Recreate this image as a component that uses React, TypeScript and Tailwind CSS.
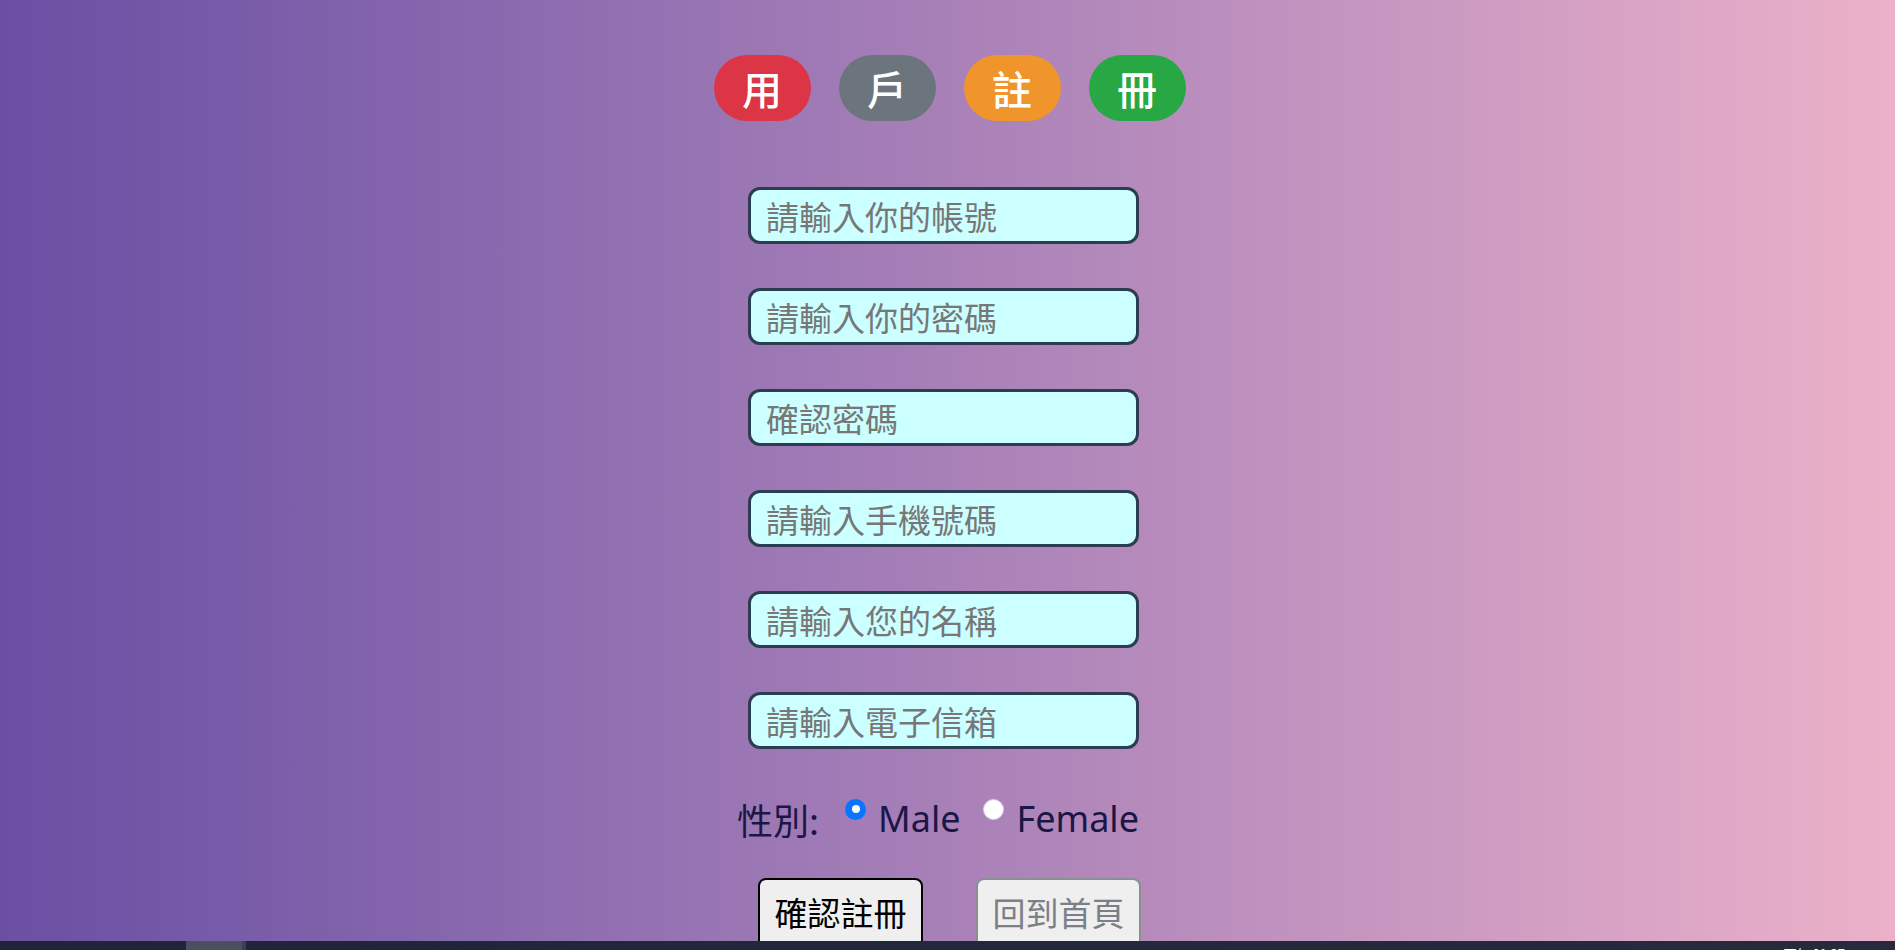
import React from "react";

const cjk = { fontFamily: '"Noto Sans CJK TC", "Noto Sans", sans-serif' };
const latin = { fontFamily: '"Noto Sans", "Noto Sans CJK TC", sans-serif' };

const placeholders = [
  "請輸入你的帳號",
  "請輸入你的密碼",
  "確認密碼",
  "請輸入手機號碼",
  "請輸入您的名稱",
  "請輸入電子信箱",
];

const pills: { ch: string; cls: string }[] = [
  { ch: "用", cls: "bg-[#dc3545]" },
  { ch: "戶", cls: "bg-[#6c757d]" },
  { ch: "註", cls: "bg-[#f0952b]" },
  { ch: "冊", cls: "bg-[#28a745]" },
];

export default function App() {
  return (
    <div className="w-[1895px] h-[950px] overflow-hidden flex flex-col" style={cjk}>
      <main className="h-[941px] overflow-hidden bg-linear-to-r from-[#6a4fa3] to-[#ecb1c9] flex flex-col items-center">
        <div className="mt-[55px] ml-[4px] flex gap-[28px]">
          {pills.map((p) => (
            <div
              key={p.ch}
              className={`${p.cls} w-[97px] h-[66px] rounded-full flex items-center justify-center text-white text-[40px] font-medium leading-none`}
            >
              {p.ch}
            </div>
          ))}
        </div>

        <div className="mt-[66px] mr-[8px] flex flex-col gap-[44px]">
          {placeholders.map((ph) => (
            <input
              key={ph}
              placeholder={ph}
              className="w-[391px] h-[57px] rounded-[12px] border-[3px] border-[#2b3d50] bg-[#ccffff] pl-[15px] text-[33px] text-[#333] placeholder:text-[#777] outline-none"
              style={cjk}
            />
          ))}
        </div>

        <div className="mt-[43px] mr-[19px] h-[54px] flex items-center text-[#1c1646] text-[36px]">
          <span style={cjk}>性別:</span>
          <span className="ml-[26px] mb-[20px] w-[21px] h-[21px] rounded-full bg-[#0a74ff] flex items-center justify-center">
            <span className="w-[8px] h-[8px] rounded-full bg-white" />
          </span>
          <span className="ml-[12px]" style={latin}>Male</span>
          <span className="ml-[22px] mb-[20px] w-[21px] h-[21px] rounded-full bg-white border border-[#d8d0e0]" />
          <span className="ml-[13px]" style={latin}>Female</span>
        </div>

        <div className="mt-[32px] ml-[4px] flex gap-[53px]">
          <button className="w-[165px] h-[70px] rounded-[8px] border-2 border-black bg-[#efefef] text-[33px] text-black" style={cjk}>
            確認註冊
          </button>
          <button className="w-[165px] h-[70px] rounded-[8px] border-2 border-[#8a8f96] bg-[#efefef] text-[33px] text-[#7b8087]" style={cjk}>
            回到首頁
          </button>
        </div>
      </main>
      <footer className="h-[9px] bg-linear-to-r from-[#1f2438] via-[#22293a] to-[#272a3c] flex overflow-hidden">
        <div className="ml-[186px] w-[56px] bg-[#4b4f5f]" />
        <div className="w-[4px] bg-[#3b3f4f]" />
        <div className="ml-auto mr-[50px] pt-[6px] text-white text-[13px] leading-none whitespace-nowrap">下午 01:27</div>
      </footer>
    </div>
  );
}
